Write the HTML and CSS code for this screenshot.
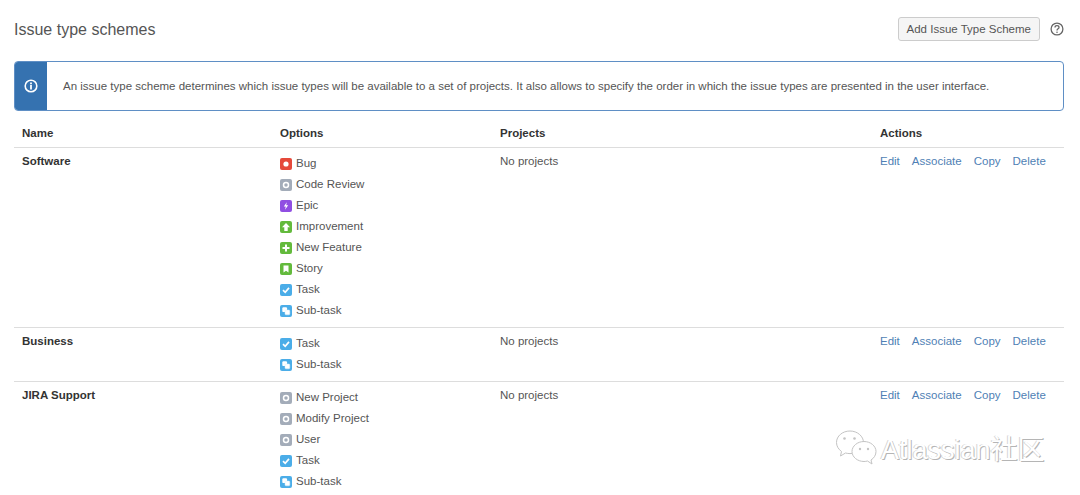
FILE: index.html
```html
<!DOCTYPE html>
<html lang="en">
<head>
    <meta charset="UTF-8">
    <meta name="viewport" content="width=device-width, initial-scale=1.0">
    <title>Issue type schemes</title>
    <link rel="stylesheet" href="styles.css">
</head>
<body>
    <svg class="icon-defs" width="0" height="0">
        <symbol id="i-bug" viewBox="0 0 12 12"><rect width="12" height="12" rx="2" fill="#e5493a"/><circle cx="6" cy="6" r="2.600" fill="#fff"/></symbol>
        <symbol id="i-grey" viewBox="0 0 12 12"><rect width="12" height="12" rx="2" fill="#a3acb9"/><circle cx="6" cy="6" r="2.500" fill="none" stroke="#fff" stroke-width="1.500"/></symbol>
        <symbol id="i-epic" viewBox="0 0 12 12"><rect width="12" height="12" rx="2" fill="#904ee2"/><path d="M6.800 2.300 3.800 6.600h2L5 9.700l3.200-4.400H6.200z" fill="#fff"/></symbol>
        <symbol id="i-improvement" viewBox="0 0 12 12"><rect width="12" height="12" rx="2" fill="#63ba3c"/><path d="M6 2 10 6.300H7.700v3.700H4.300V6.300H2z" fill="#fff"/></symbol>
        <symbol id="i-feature" viewBox="0 0 12 12"><rect width="12" height="12" rx="2" fill="#63ba3c"/><path d="M5 2.500h2V5h2.500v2H7v2.500H5V7H2.500V5H5z" fill="#fff"/></symbol>
        <symbol id="i-story" viewBox="0 0 12 12"><rect width="12" height="12" rx="2" fill="#63ba3c"/><path d="M3.500 2.500h5v7L6 7.700 3.500 9.500z" fill="#fff"/></symbol>
        <symbol id="i-task" viewBox="0 0 12 12"><rect width="12" height="12" rx="2" fill="#4bade8"/><path d="M3 6.200 5.200 8.300 9 3.900" fill="none" stroke="#fff" stroke-width="1.700"/></symbol>
        <symbol id="i-subtask" viewBox="0 0 12 12"><rect width="12" height="12" rx="2" fill="#4bade8"/><rect x="2.300" y="2.300" width="4.800" height="4.800" rx="1.200" fill="#fff"/><rect x="5" y="5" width="4.800" height="4.800" rx="1" fill="#fff" stroke="#d4ecfa" stroke-width=".5"/></symbol>
    </svg>

    <header class="page-header">
        <h1>Issue type schemes</h1>
        <div class="header-actions">
            <a href="#" class="btn">Add Issue Type Scheme</a>
            <svg class="help-icon" viewBox="0 0 14 14" width="14" height="14">
                <circle cx="7" cy="7" r="5.900" fill="none" stroke="#666" stroke-width="1.300"/>
                <path d="M5 5.500C5 4.300 5.900 3.700 7 3.700S9 4.400 9 5.400C9 6.800 7 6.800 7 8.400" fill="none" stroke="#666" stroke-width="1.300"/>
                <circle cx="7" cy="10.200" r=".8" fill="#666"/>
            </svg>
        </div>
    </header>

    <div class="message">
        <div class="message-icon">
            <svg viewBox="0 0 14 14" width="14" height="14">
                <circle cx="7" cy="7" r="5.800" fill="none" stroke="#fff" stroke-width="1.600"/>
                <rect x="6.100" y="3.500" width="1.800" height="1.800" fill="#fff"/>
                <rect x="6.100" y="6" width="1.800" height="4.500" fill="#fff"/>
            </svg>
        </div>
        <p>An issue type scheme determines which issue types will be available to a set of projects. It also allows to specify the order in which the issue types are presented in the user interface.</p>
    </div>

    <table class="schemes">
        <thead>
            <tr>
                <th class="col-name">Name</th>
                <th class="col-options">Options</th>
                <th class="col-projects">Projects</th>
                <th>Actions</th>
            </tr>
        </thead>
        <tbody>
            <tr>
                <td class="scheme-name">Software</td>
                <td>
                    <ul class="options">
                        <li><svg><use href="#i-bug"/></svg>Bug</li>
                        <li><svg><use href="#i-grey"/></svg>Code Review</li>
                        <li><svg><use href="#i-epic"/></svg>Epic</li>
                        <li><svg><use href="#i-improvement"/></svg>Improvement</li>
                        <li><svg><use href="#i-feature"/></svg>New Feature</li>
                        <li><svg><use href="#i-story"/></svg>Story</li>
                        <li><svg><use href="#i-task"/></svg>Task</li>
                        <li><svg><use href="#i-subtask"/></svg>Sub-task</li>
                    </ul>
                </td>
                <td>No projects</td>
                <td class="actions"><a href="#">Edit</a><a href="#">Associate</a><a href="#">Copy</a><a href="#">Delete</a></td>
            </tr>
            <tr>
                <td class="scheme-name">Business</td>
                <td>
                    <ul class="options">
                        <li><svg><use href="#i-task"/></svg>Task</li>
                        <li><svg><use href="#i-subtask"/></svg>Sub-task</li>
                    </ul>
                </td>
                <td>No projects</td>
                <td class="actions"><a href="#">Edit</a><a href="#">Associate</a><a href="#">Copy</a><a href="#">Delete</a></td>
            </tr>
            <tr>
                <td class="scheme-name">JIRA Support</td>
                <td>
                    <ul class="options">
                        <li><svg><use href="#i-grey"/></svg>New Project</li>
                        <li><svg><use href="#i-grey"/></svg>Modify Project</li>
                        <li><svg><use href="#i-grey"/></svg>User</li>
                        <li><svg><use href="#i-task"/></svg>Task</li>
                        <li><svg><use href="#i-subtask"/></svg>Sub-task</li>
                    </ul>
                </td>
                <td>No projects</td>
                <td class="actions"><a href="#">Edit</a><a href="#">Associate</a><a href="#">Copy</a><a href="#">Delete</a></td>
            </tr>
        </tbody>
    </table>

    <div class="watermark">
        <svg viewBox="0 0 42 38" width="42" height="38" fill="#fff" stroke="#c4c4c4" stroke-width="1">
            <path d="M15 2C7.500 2 1.500 7 1.500 13.500c0 3.700 2 6.800 5 9l-1 4.500 5-3c1.500.4 3 .6 4.500.6 7.500 0 13.500-5 13.500-11.100S22.500 2 15 2z"/>
            <path d="M29 12.500c-6.500 0-12 4.500-12 10s5.500 10 12 10c1.200 0 2.400-.2 3.500-.5l4.500 3-1-4c3-1.800 5-5 5-8.500 0-5.500-5.500-10-12-10z"/>
            <circle cx="9.500" cy="9.500" r="1.300" stroke="none" fill="#c4c4c4"/>
            <circle cx="19.500" cy="9.500" r="1.300" stroke="none" fill="#c4c4c4"/>
            <circle cx="25" cy="20" r="1.200" stroke="none" fill="#c4c4c4"/>
            <circle cx="33" cy="20" r="1.200" stroke="none" fill="#c4c4c4"/>
        </svg>
        <span>Atlassian社区</span>
    </div>
</body>
</html>
```

FILE: styles.css
```css
:root {
    --color-text: #333333;
    --color-muted: #555555;
    --color-link: #4f7fb5;
    --color-line: #dddddd;
}

body {
    position: relative;
    font-family: 'Liberation Sans', Arial, 'Noto Sans CJK SC', sans-serif;
    font-size: 11.5px;
    line-height: 21px;
    margin: 0;
    padding: 16px 16px 0 14px;
    height: 479px;
    overflow: hidden;
    background-color: white;
    color: var(--color-text);
}

.icon-defs {
    position: absolute;
}

.page-header {
    display: flex;
    justify-content: space-between;
    align-items: center;
    height: 26px;
    margin-bottom: 19px;
}

h1 {
    margin: 0;
    font-size: 16px;
    font-weight: normal;
    color: var(--color-muted);
}

.header-actions {
    display: flex;
    align-items: center;
    gap: 10px;
}

.btn {
    box-sizing: border-box;
    height: 24px;
    line-height: 22px;
    padding: 0 8px;
    background-color: #f5f5f5;
    border: 1px solid #cccccc;
    border-radius: 3px;
    color: var(--color-muted);
    text-decoration: none;
}

.message {
    box-sizing: border-box;
    display: flex;
    align-items: center;
    height: 50px;
    border: 1px solid #5f8fc5;
    border-radius: 4px;
    overflow: hidden;
}

.message-icon {
    display: flex;
    align-items: center;
    justify-content: center;
    align-self: stretch;
    width: 32px;
    background-color: #3572b0;
}

.message p {
    margin: 0 0 0 16px;
    color: var(--color-muted);
}

.schemes {
    width: 100%;
    border-collapse: collapse;
    table-layout: fixed;
}

.schemes th {
    height: 28px;
    padding: 8px 8px 0;
    text-align: left;
    border-bottom: 1px solid var(--color-line);
}

.schemes td {
    vertical-align: top;
    padding: 3px 8px 6px;
    border-bottom: 1px solid var(--color-line);
    color: var(--color-muted);
}

.schemes .scheme-name {
    font-weight: bold;
    color: var(--color-text);
}

.col-name {
    width: 242px;
}

.col-options {
    width: 204px;
}

.col-projects {
    width: 364px;
}

.options {
    list-style: none;
    margin: 2px 0 0;
    padding: 0;
}

.options li {
    display: flex;
    align-items: center;
}

.options svg {
    width: 12px;
    height: 12px;
    margin-right: 4px;
    flex: none;
}

.actions a {
    margin-right: 12px;
    color: var(--color-link);
    text-decoration: none;
}

.watermark {
    position: absolute;
    left: 835px;
    top: 428px;
    display: flex;
    align-items: center;
    gap: 4px;
    font-size: 27px;
    line-height: 36px;
    color: white;
    text-shadow: 1px 1px 0 #b5b5b5, -1px 0 0 #d5d5d5;
}

.watermark span {
    padding-top: 4px;
}
```
